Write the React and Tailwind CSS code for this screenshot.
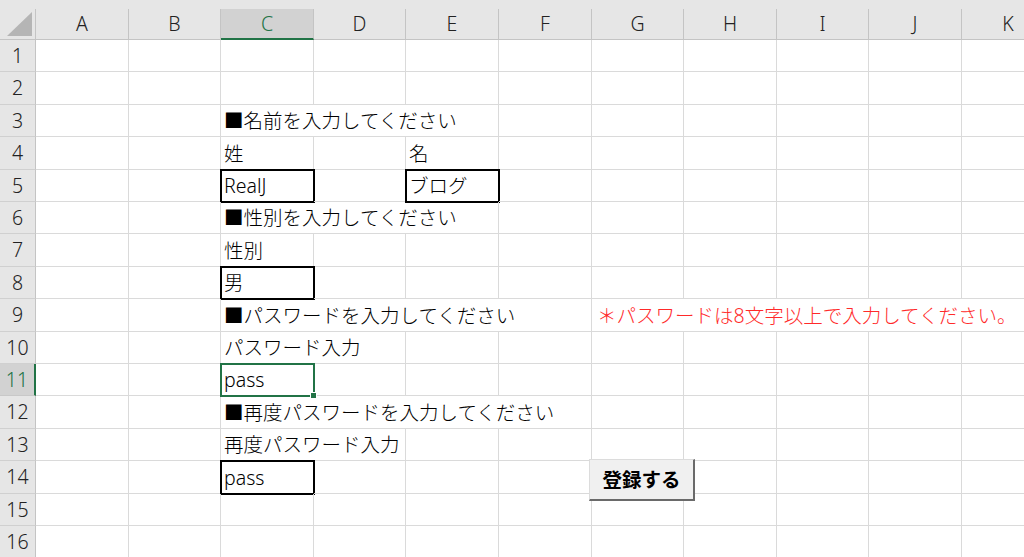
import React from "react";

const COLS = [
  { k: "A", w: "w-[93px]" },
  { k: "B", w: "w-[92px]" },
  { k: "C", w: "w-[93px]" },
  { k: "D", w: "w-[92px]" },
  { k: "E", w: "w-[93px]" },
  { k: "F", w: "w-[93px]" },
  { k: "G", w: "w-[92px]" },
  { k: "H", w: "w-[93px]" },
  { k: "I", w: "w-[92px]" },
  { k: "J", w: "w-[93px]" },
  { k: "K", w: "w-[93px]" },
];

const ROWS = [
  { n: 1, h: "h-[32px]" },
  { n: 2, h: "h-[33px]" },
  { n: 3, h: "h-[32px]" },
  { n: 4, h: "h-[33px]" },
  { n: 5, h: "h-[32px]" },
  { n: 6, h: "h-[32px]" },
  { n: 7, h: "h-[33px]" },
  { n: 8, h: "h-[32px]" },
  { n: 9, h: "h-[33px]" },
  { n: 10, h: "h-[32px]" },
  { n: 11, h: "h-[32px]" },
  { n: 12, h: "h-[33px]" },
  { n: 13, h: "h-[32px]" },
  { n: 14, h: "h-[33px]" },
  { n: 15, h: "h-[32px]" },
  { n: 16, h: "h-[32px]" },
];

const BOX = "outline-2 outline-black outline-offset-[-1px]";
const SEL = "outline-2 outline-[#217346] outline-offset-[-1px] relative";

const CONTENT = {
  3: [{ from: 2, to: 4, w: "w-[278px]", text: "■名前を入力してください" }],
  4: [
    { from: 2, to: 2, w: "w-[93px]", text: "姓" },
    { from: 4, to: 4, w: "w-[93px]", text: "名" },
  ],
  5: [
    { from: 2, to: 2, w: "w-[93px]", text: "RealJ", extra: BOX },
    { from: 4, to: 4, w: "w-[93px]", text: "ブログ", extra: BOX },
  ],
  6: [{ from: 2, to: 4, w: "w-[278px]", text: "■性別を入力してください" }],
  7: [{ from: 2, to: 2, w: "w-[93px]", text: "性別" }],
  8: [{ from: 2, to: 2, w: "w-[93px]", text: "男", extra: BOX }],
  9: [
    { from: 2, to: 5, w: "w-[371px]", text: "■パスワードを入力してください" },
    {
      from: 6,
      to: 10,
      w: "w-[463px]",
      text: "＊パスワードは8文字以上で入力してください。",
      extra: "text-[#ff2a2a] pl-[5px]",
    },
  ],
  10: [{ from: 2, to: 3, w: "w-[185px]", text: "パスワード入力" }],
  11: [{ from: 2, to: 2, w: "w-[93px]", text: "pass", extra: SEL, handle: true }],
  12: [{ from: 2, to: 5, w: "w-[371px]", text: "■再度パスワードを入力してください" }],
  13: [{ from: 2, to: 3, w: "w-[185px]", text: "再度パスワード入力" }],
  14: [{ from: 2, to: 2, w: "w-[93px]", text: "pass", extra: BOX }],
};

function segments(n) {
  const specs = CONTENT[n] || [];
  const out = [];
  let i = 0;
  while (i < COLS.length) {
    const s = specs.find((x) => x.from === i);
    if (s) {
      out.push(s);
      i = s.to + 1;
    } else {
      out.push({ from: i, to: i, w: COLS[i].w, text: "" });
      i += 1;
    }
  }
  return out;
}

function Corner() {
  return (
    <div className="w-[36px] h-full shrink-0 border-r border-b border-[#c4c4c4] bg-[#e6e6e6] flex items-end justify-end pr-[3px] pb-[3px]">
      <svg width="25" height="24" viewBox="0 0 25 24">
        <polygon points="25,0 25,24 0,24" fill="#b5b5b5" />
      </svg>
    </div>
  );
}

export default function App() {
  return (
    <div className="relative w-[1024px] h-[557px] overflow-hidden bg-white font-['Noto_Sans','Noto_Sans_CJK_JP',sans-serif] font-light text-[19.5px] text-black">
      <div className="h-[9px] bg-[#e6e6e6]" />
      <div className="flex h-[31px]">
        <Corner />
        {COLS.map((c) =>
          c.k === "C" ? (
            <div
              key={c.k}
              className={`${c.w} h-full shrink-0 flex items-center justify-center bg-[#d2d2d2] text-[#217346] border-r border-[#c4c4c4] border-b-2 border-b-[#217346] leading-none`}
            >
              {c.k}
            </div>
          ) : (
            <div
              key={c.k}
              className={`${c.w} h-full shrink-0 flex items-center justify-center bg-[#e6e6e6] text-[#222] border-r border-b border-[#c4c4c4] leading-none`}
            >
              {c.k}
            </div>
          )
        )}
      </div>
      {ROWS.map((r) => (
        <div key={r.n} className={`flex ${r.h}`}>
          {r.n === 11 ? (
            <div className="w-[36px] h-full shrink-0 flex items-center justify-center bg-[#d2d2d2] text-[#217346] border-r-2 border-r-[#217346] border-b border-b-[#c8c8c8] leading-none">
              {r.n}
            </div>
          ) : (
            <div className="w-[36px] h-full shrink-0 flex items-center justify-center bg-[#e6e6e6] text-[#222] border-r border-r-[#c4c4c4] border-b border-b-[#d0d0d0] leading-none">
              {r.n}
            </div>
          )}
          {segments(r.n).map((s) => (
            <div
              key={s.from}
              className={`${s.w} h-full shrink-0 flex items-center pl-[3px] pt-[1px] whitespace-nowrap leading-none border-r border-b border-[#dadada] ${s.extra || ""}`}
            >
              {s.text}
              {s.handle && (
                <span className="absolute right-[-4px] bottom-[-4px] w-[7px] h-[7px] bg-[#217346] border border-white" />
              )}
            </div>
          ))}
        </div>
      ))}
      <button className="absolute left-[589px] top-[459px] w-[106px] h-[42px] bg-[#f0f0f0] border-t border-l border-t-[#dcdcdc] border-l-[#dcdcdc] border-r-2 border-b-2 border-r-[#6a6a6a] border-b-[#6a6a6a] flex items-center justify-center font-bold text-[19.5px] text-black leading-none">
        登録する
      </button>
    </div>
  );
}
